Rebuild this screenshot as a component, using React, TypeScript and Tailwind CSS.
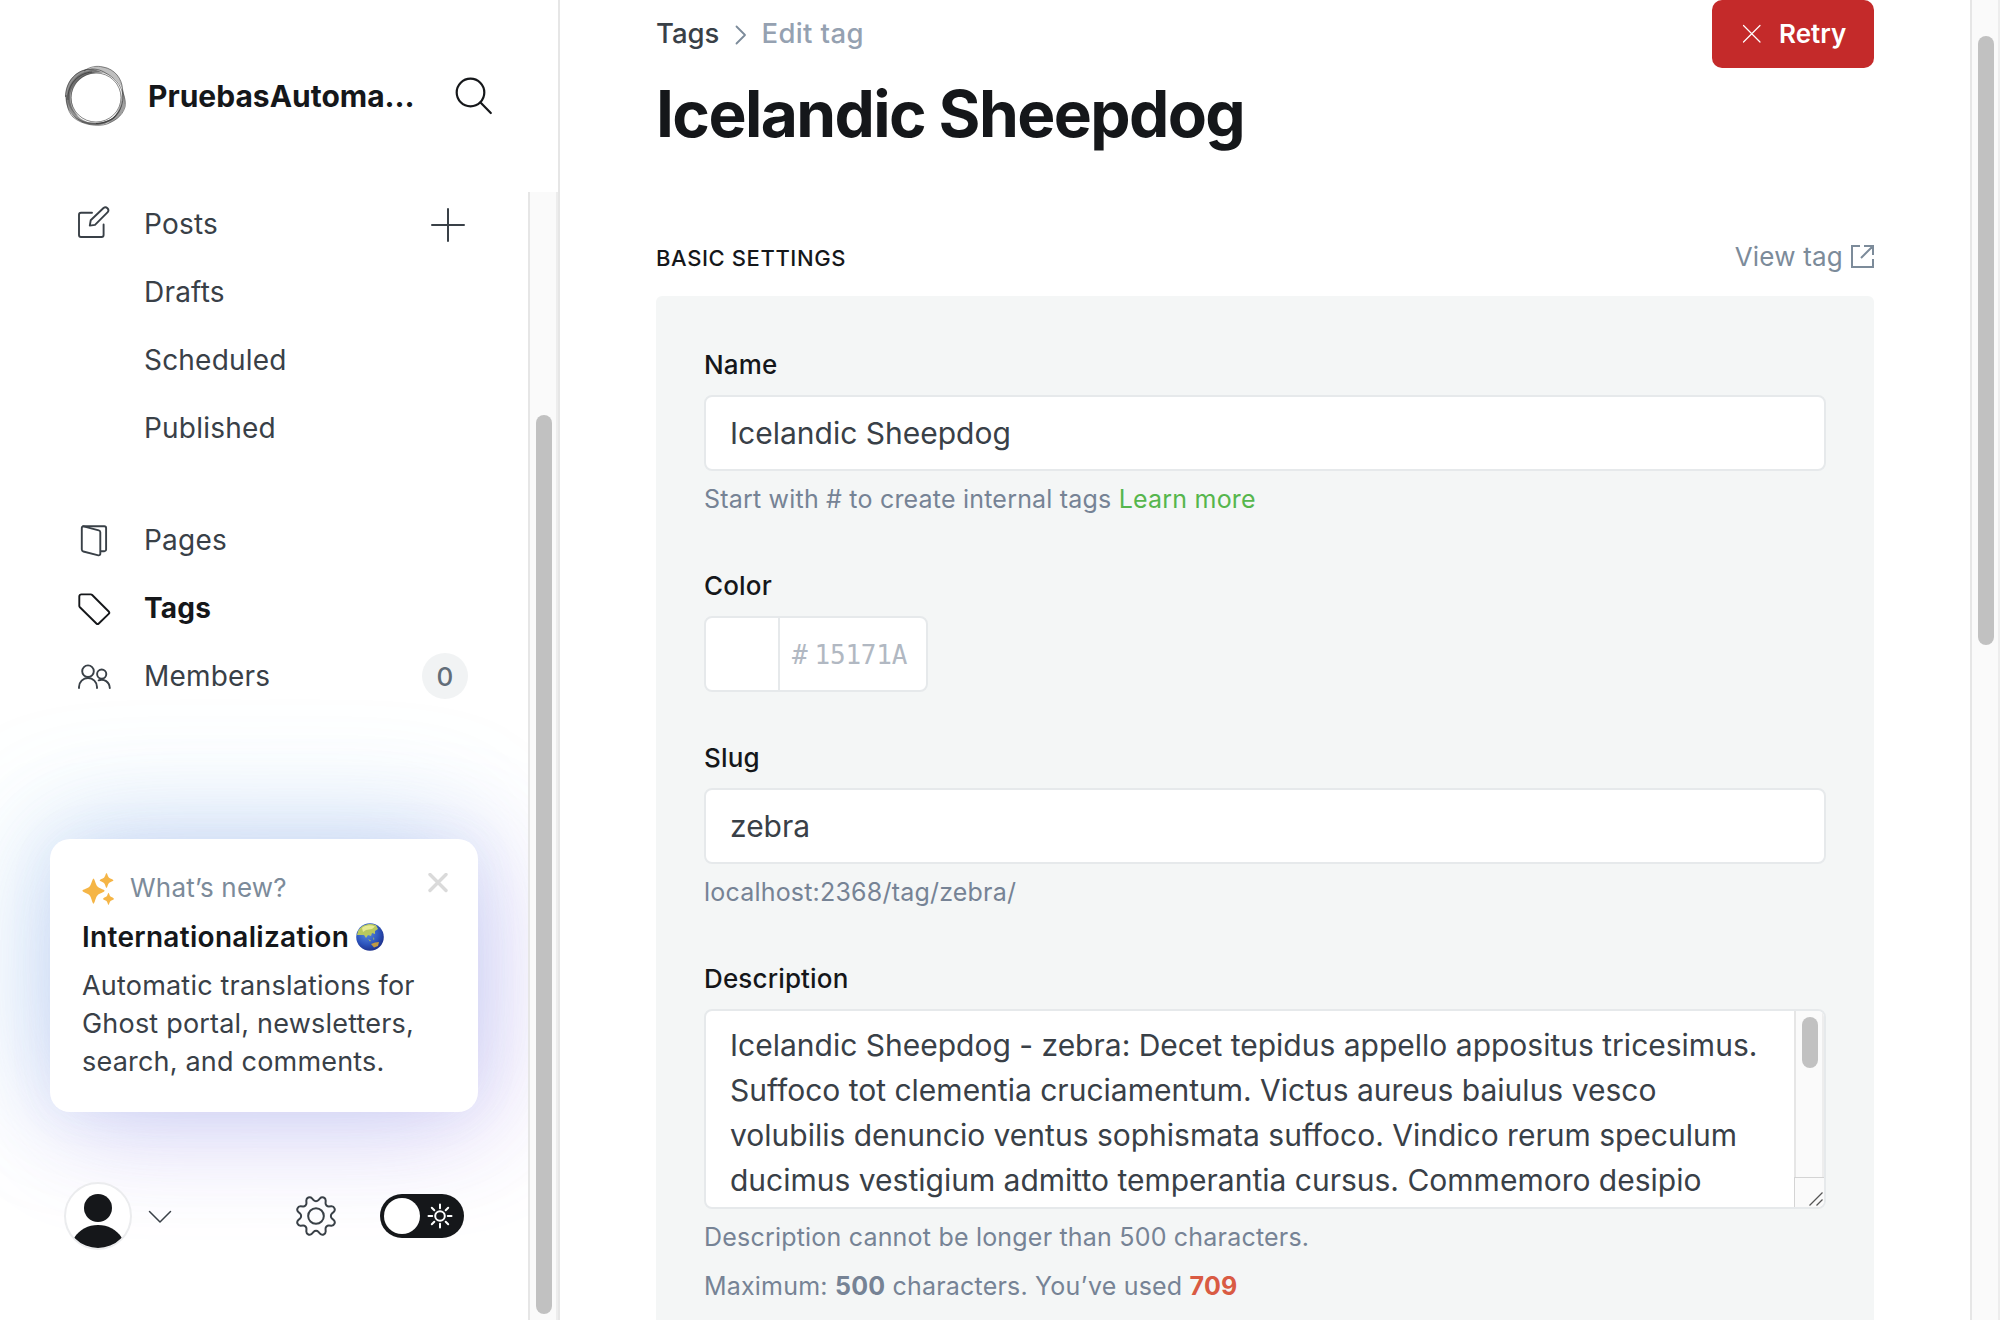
import React from "react";

const subItems = ["Drafts", "Scheduled", "Published"];

function Logo() {
  return (
    <svg width="64" height="64" viewBox="0 0 64 64" fill="none" className="shrink-0">
      <g fill="#2a2a2a" fillRule="evenodd">
        <path
          fillOpacity="0.5"
          d="M1.500 33C1.500 17 12 6 25 5C31 5 35 7 39 9C24 6 7 17 6 33C6 48 17 59 31.500 59C45 59 55 51 58 40C56 53 45 60.500 32 60.500C15 61 1.500 49 1.500 33Z"
        />
        <path
          fillOpacity="0.3"
          d="M24 6C29 3 33 1.500 39 3C51 5 58 15 58.500 25C54 15 44 8.500 34 8.500C30 8 27 7 24 6Z"
        />
        <path fillOpacity="0.45" d="M58.500 24C60 31 62 37 60.500 43C57.500 53 50 57 43 60C50 54 58 44 57.500 32Z" />
        <path fillOpacity="0.35" d="M3 31C5 18 13 9 25 7L34 9C19 9 8 20 7.500 34C7.500 42 11 48 15 53C6 47 3 39 3 31Z" />
        <path fillOpacity="0.5" d="M8 50C18 61 40 62 53 51C46 60 38 61 31 61C22 61 13 57 8 50Z" />
      </g>
      <g stroke="#222" strokeWidth="0.9" strokeOpacity="0.6">
        <path d="M20 7C26 2.500 33 1.500 39 3C51 5 58 15 58.500 25C59 31 62.500 36 61 43C58 53 50 57 43 60C34 63 18 61 9 53C2.500 46 3 38 2 31" />
        <path d="M1.500 33C1.500 17 13 5 28 5C36 5 40 8 45 11C53 16 59 24 59 34C58 49 47 59.500 32 59.500" />
        <ellipse cx="32" cy="33.500" rx="25" ry="24.500" />
        <path d="M4 36C3 20 15 9 28 8" />
      </g>
    </svg>
  );
}

function PostsIcon() {
  return (
    <svg width="36" height="36" viewBox="0 0 36 36" fill="none" stroke="#394047" strokeWidth="1.900" strokeLinecap="round" strokeLinejoin="round">
      <path d="M16 6.800H5a2 2 0 0 0-2 2v20.200a2 2 0 0 0 2 2h20.600a2 2 0 0 0 2-2V18.500" />
      <path d="M13.800 19.600l.9-5.300L27.500 2a3 3 0 0 1 4.200 4.200L19 18.900z" />
    </svg>
  );
}

function PagesIcon() {
  return (
    <svg width="36" height="36" viewBox="0 0 36 36" fill="none" stroke="#394047" strokeWidth="1.900" strokeLinecap="round" strokeLinejoin="round">
      <path d="M7 4.300h21.300a1.800 1.800 0 0 1 1.800 1.800v21.300a1.800 1.800 0 0 1-1.800 1.800h-3.500" />
      <path d="M7.600 4.400l15.200 4a2 2 0 0 1 1.500 1.900v21.600a1.500 1.500 0 0 1-1.900 1.400L7.300 29.500a2 2 0 0 1-1.500-1.900V5.900a1.500 1.500 0 0 1 1.800-1.500z" />
    </svg>
  );
}

function TagIcon() {
  return (
    <svg width="36" height="36" viewBox="0 0 36 36" fill="none" stroke="#15171a" strokeWidth="1.900" strokeLinecap="round" strokeLinejoin="round">
      <path d="M5.400 4.400h9.400a2 2 0 0 1 1.400.6l16.500 16.500a1.700 1.700 0 0 1 0 2.400l-9.900 9.600a1.700 1.700 0 0 1-2.400 0L3.900 17.300a2 2 0 0 1-.6-1.400V6.500a2.100 2.100 0 0 1 2.100-2.100z" />
    </svg>
  );
}

function MembersIcon() {
  return (
    <svg width="36" height="36" viewBox="0 0 36 36" fill="none" stroke="#394047" strokeWidth="1.900" strokeLinecap="round" strokeLinejoin="round">
      <circle cx="12" cy="13.200" r="5.800" />
      <path d="M3 30v-1a9 9 0 0 1 18 0v1" />
      <circle cx="25.700" cy="16.100" r="4.600" />
      <path d="M22.600 22.300c5.500-1.800 10.900 1.400 11.200 7.700" />
    </svg>
  );
}

function GearIcon() {
  return (
    <svg width="40" height="40" viewBox="0 0 24 24" fill="none" stroke="#394047" strokeWidth="1.200" strokeLinecap="round" strokeLinejoin="round">
      <path d="M10.546 2.438a1.957 1.957 0 0 0 2.908 0L14.400 1.400a1.959 1.959 0 0 1 3.410 1.413l-.071 1.400a1.958 1.958 0 0 0 2.051 2.054l1.400-.071a1.959 1.959 0 0 1 1.410 3.410l-1.042.94a1.960 1.960 0 0 0 0 2.909l1.042.94a1.959 1.959 0 0 1-1.413 3.410l-1.400-.071a1.958 1.958 0 0 0-2.056 2.056l.071 1.400A1.959 1.959 0 0 1 14.400 22.600l-.941-1.041a1.959 1.959 0 0 0-2.908 0L9.606 22.600A1.959 1.959 0 0 1 6.200 21.192l.072-1.400a1.958 1.958 0 0 0-2.056-2.056l-1.400.071A1.958 1.958 0 0 1 1.400 14.400l1.041-.94a1.960 1.960 0 0 0 0-2.909L1.400 9.606A1.958 1.958 0 0 1 2.809 6.200l1.400.071a1.958 1.958 0 0 0 2.058-2.060L6.200 2.810A1.959 1.959 0 0 1 9.606 1.400z" />
      <circle cx="12" cy="12" r="4.700" />
    </svg>
  );
}

function Sparkles() {
  return (
    <svg width="32" height="32" viewBox="0 0 32 32" fill="#f5b546" className="shrink-0">
      <path d="M11.500 5.500C13 6.500 13.500 11.800 15.800 13.800C17.800 15.700 22.500 16.500 22.600 17.800C22.500 19.200 17.800 20.200 15.800 22C13.500 24 13 30 11.500 30.700C10 30 9.500 24 7.300 22C5.200 20.200 .6 19.200 .4 17.800C.6 16.500 5.200 15.700 7.300 13.800C9.500 11.800 10 6.500 11.500 5.500Z" />
      <path d="M24.500 0C25.500 .6 25.700 3.600 27 4.700C28.300 5.800 31.400 6.200 31.500 7.300C31.400 8.400 28.300 8.900 27 10C25.700 11.200 25.500 14.500 24.500 15C23.500 14.500 23.300 11.200 22 10C20.700 8.900 17.700 8.400 17.600 7.300C17.700 6.200 20.700 5.800 22 4.700C23.300 3.600 23.500 .6 24.500 0Z" />
      <path d="M26.500 19.700C27.300 20.300 27.500 22.700 28.500 23.600C29.500 24.500 31.900 24.900 32 25.900C31.900 26.800 29.500 27.200 28.500 28.100C27.500 29 27.300 31.500 26.500 32C25.700 31.500 25.500 29 24.500 28.100C23.500 27.200 21.100 26.800 21 25.900C21.100 24.900 23.500 24.500 24.500 23.600C25.500 22.700 25.700 20.300 26.500 19.700Z" />
    </svg>
  );
}

function Globe() {
  return (
    <svg width="28" height="28" viewBox="0 0 28 28" className="ml-[7px] shrink-0">
      <defs>
        <radialGradient id="sea" cx="0.4" cy="0.35" r="0.7">
          <stop offset="0" stopColor="#5b8de0" />
          <stop offset="0.6" stopColor="#2d55bd" />
          <stop offset="1" stopColor="#1b2c86" />
        </radialGradient>
        <clipPath id="disc">
          <circle cx="14" cy="14" r="13.500" />
        </clipPath>
      </defs>
      <circle cx="14" cy="14" r="13.800" fill="url(#sea)" />
      <g clipPath="url(#disc)">
        <path fill="#b9c95f" d="M2 8C6 1 14 0 20 2L22 6L19 8L19 11L16 10L15 13L12 12L10 15L8 12L4 12L1 12Z" />
        <path fill="#e6ea93" d="M6 5C9 2 15 1.500 19 3.500L16 6L10 7L7 9Z" />
        <path fill="#c09a45" d="M15 21L19 19.500L23 19L22 23L18 24.500Z" />
        <path fill="#a6bd5a" d="M12 16L15 17.500L14 18.500ZM17 14L18.500 16L17.500 17Z" />
      </g>
    </svg>
  );
}

function NavRow({
  icon,
  label,
  active = false,
  children,
}: {
  icon?: React.ReactNode;
  label: string;
  active?: boolean;
  children?: React.ReactNode;
}) {
  return (
    <div className="flex h-[68px] items-center pr-[60px] pl-[76px]">
      <span className="w-[68px] shrink-0">{icon}</span>
      <span
        className={
          active
            ? "flex-1 text-[28px] font-bold tracking-[0.2px] text-[#15171a]"
            : "flex-1 text-[28px] tracking-[0.2px] text-[#394047]"
        }
      >
        {label}
      </span>
      {children}
    </div>
  );
}

function WhatsNew() {
  return (
    <div className="mx-[50px] mt-[129px] h-[273px] w-[428px] rounded-[20px] bg-white pt-[34px] pr-[29px] pl-8 shadow-[-14px_-14px_120px_rgba(90,205,230,0.26),14px_14px_110px_rgba(175,105,230,0.32),0_0_50px_rgba(110,130,220,0.06)]">
      <div className="flex h-8 items-start">
        <Sparkles />
        <span className="ml-4 flex-1 text-[26px] leading-[30px] tracking-[0.2px] text-[#7c8b9a]">What’s new?</span>
        <svg width="20" height="20" viewBox="0 0 20 20" stroke="#dadada" strokeWidth="3.400" strokeLinecap="round" className="mr-px">
          <path d="M2 1.500L18 17.500M18 1.500L2 17.500" />
        </svg>
      </div>
      <div className="mt-[13px] flex h-[38px] items-center">
        <span className="text-[28px] font-semibold tracking-[0.3px] text-[#15171a]">Internationalization</span>
        <Globe />
      </div>
      <p className="mt-[11px] text-[27px] leading-[38px] tracking-[0.2px] whitespace-nowrap text-[#394047]">
        Automatic translations for
        <br />
        Ghost portal, newsletters,
        <br />
        search, and comments.
      </p>
    </div>
  );
}

function SidebarFooter() {
  return (
    <div className="mt-[70px] flex h-[68px] items-center pl-16">
      <div className="size-[68px] overflow-hidden rounded-full border-2 border-[#ebecee] bg-white">
        <svg width="64" height="64" viewBox="0 0 64 64" fill="#15171a">
          <circle cx="32" cy="24" r="14" />
          <path d="M8 54C14 45 22 41 32 41C42 41 50 45 56 54C50 61 41 64.500 32 64.500C23 64.500 14 61 8 54Z" />
        </svg>
      </div>
      <svg width="24" height="14" viewBox="0 0 24 14" fill="none" stroke="#394047" strokeWidth="1.500" strokeLinecap="round" strokeLinejoin="round" className="mt-0.5 ml-4">
        <path d="M1.500 1.500L12 12L22.500 1.500" />
      </svg>
      <span className="ml-[124px]">
        <GearIcon />
      </span>
      <div className="ml-11 flex h-11 w-[84px] items-center rounded-full bg-[#15171a] pl-1">
        <span className="size-9 rounded-full bg-white" />
        <svg width="26" height="26" viewBox="-13 -13 26 26" fill="none" stroke="#fff" strokeWidth="2" strokeLinecap="round" className="ml-[7px]">
          <circle cx="0" cy="0" r="4.800" />
          <path d="M0-11.500V-7.800M0 11.500V7.800M-11.500 0H-7.800M11.500 0H7.800M-8.200-8.200L-5.700-5.700M8.200 8.200L5.700 5.700M-8.200 8.200L-5.700 5.700M8.200-8.200L5.700-5.700" />
        </svg>
      </div>
    </div>
  );
}

function Sidebar() {
  return (
    <aside className="flex w-[560px] shrink-0 flex-col border-r-2 border-[#e6e6e6] bg-white">
      <header className="flex h-48 items-center pl-16">
        <Logo />
        <span className="ml-5 w-[268px] text-[30px] font-bold whitespace-nowrap text-[#15171a]">PruebasAutoma…</span>
        <svg width="38" height="38" viewBox="0 0 38 38" fill="none" stroke="#15171a" strokeWidth="2.200" strokeLinecap="round" className="ml-[39px]">
          <circle cx="15.500" cy="15.500" r="13.800" />
          <path d="M25.500 25.500L35.800 36" />
        </svg>
      </header>
      <div className="flex min-h-0 flex-1">
        <div className="w-[528px] overflow-hidden">
          <nav className="-mt-0.5">
            <NavRow icon={<PostsIcon />} label="Posts">
              <svg width="34" height="34" viewBox="0 0 34 34" stroke="#394047" strokeWidth="2" strokeLinecap="round" className="mt-0.5 mr-[3px]">
                <path d="M17 1V33M1 17H33" />
              </svg>
            </NavRow>
            {subItems.map((item) => (
              <NavRow key={item} label={item} />
            ))}
            <div className="h-11" />
            <NavRow icon={<PagesIcon />} label="Pages" />
            <NavRow icon={<TagIcon />} label="Tags" active />
            <NavRow icon={<MembersIcon />} label="Members">
              <span className="flex size-[46px] items-center justify-center rounded-full bg-[#f1f3f4] text-[26px] font-medium text-[#626d79]">0</span>
            </NavRow>
          </nav>
          <WhatsNew />
          <SidebarFooter />
        </div>
        <div className="w-[30px] border-x-2 border-l-[#e6e6e6] border-r-[#ededed] bg-[#fafafa] pt-[223px] pl-1.5">
          <div className="h-[899px] w-4 rounded-full bg-[#c1c1c1]" />
        </div>
      </div>
    </aside>
  );
}

function Label({ children }: { children: React.ReactNode }) {
  return <label className="block h-[46px] text-[26px] leading-8 font-medium tracking-[0.15px] text-[#15171a]">{children}</label>;
}

function Help({ children }: { children: React.ReactNode }) {
  return <p className="mt-3 h-8 text-[25px] leading-8 tracking-[0.2px] whitespace-nowrap text-[#768395]">{children}</p>;
}

function TextField({ value }: { value: string }) {
  return (
    <div className="flex h-[76px] items-center rounded-lg border-2 border-[#e6e9eb] bg-white px-6 text-[30px] text-[#394047]">
      {value}
    </div>
  );
}

function DescriptionField() {
  return (
    <div className="flex h-[200px] overflow-hidden rounded-lg border-2 border-[#e6e9eb] bg-white">
      <p className="flex-1 overflow-hidden pt-3 pl-6 text-[30px] leading-[45px] whitespace-nowrap text-[#394047]">
        Icelandic Sheepdog - zebra: Decet tepidus appello appositus tricesimus.
        <br />
        Suffoco tot clementia cruciamentum. Victus aureus baiulus vesco
        <br />
        volubilis denuncio ventus sophismata suffoco. Vindico rerum speculum
        <br />
        ducimus vestigium admitto temperantia cursus. Commemoro desipio
      </p>
      <div className="flex w-[30px] flex-col">
        <div className="flex-1 border-x-2 border-l-[#e6e6e6] border-r-[#ededed] bg-[#fafafa] pt-1.5 pl-1.5">
          <div className="h-[51px] w-4 rounded-full bg-[#c1c1c1]" />
        </div>
        <div className="flex h-[30px] items-end justify-end border-t border-l border-[#d4d4d4] bg-[#fafafa]">
          <svg width="15" height="15" viewBox="0 0 15 15" stroke="#555" strokeWidth="1.300">
            <path d="M0.500 13.500L13.500 0.500M7.500 13.500L13.500 7.500" />
          </svg>
        </div>
      </div>
    </div>
  );
}

export default function App() {
  return (
    <div className="flex h-[1320px] w-[2000px] overflow-hidden bg-white font-['Inter',sans-serif]">
      <Sidebar />
      <main className="flex w-[1410px] shrink-0 flex-col px-24">
        <div className="flex h-[68px] w-[1218px] items-start justify-between">
          <div className="flex h-[68px] items-center text-[27.500px]">
            <span className="font-medium text-[#394047]">Tags</span>
            <svg width="12" height="20" viewBox="0 0 12 20" fill="none" stroke="#7c8b9a" strokeWidth="1.800" strokeLinecap="round" strokeLinejoin="round" className="mt-0.5 mr-3.5 ml-4">
              <path d="M1.500 1.500L10 10L1.500 18.500" />
            </svg>
            <span className="font-medium tracking-[0.4px] text-[#95a1b1]">Edit tag</span>
          </div>
          <button className="flex h-[68px] w-[162px] items-center rounded-[10px] bg-[#c42a2a] pb-px pl-[30px] text-[26px] font-semibold text-white">
            <svg width="20" height="20" viewBox="0 0 20 20" stroke="#fff" strokeWidth="1.200" strokeLinecap="round" className="mt-px">
              <path d="M1.500 1.500L18 18M18 1.500L1.500 18" />
            </svg>
            <span className="ml-[17px]">Retry</span>
          </button>
        </div>
        <h1 className="mt-2 h-[76px] text-[64px] leading-[76px] font-bold tracking-[-1.600px] text-[#15171a]">Icelandic Sheepdog</h1>
        <div className="mt-[84px] flex h-11 w-[1218px] items-center justify-between">
          <h2 className="text-[22px] font-medium tracking-[0.6px] text-[#15171a] uppercase">Basic settings</h2>
          <a className="mb-[3px] flex items-center text-[26px] tracking-[0.2px] text-[#7c8b9a]">
            View tag
            <svg width="23" height="23" viewBox="0 0 23 23" fill="none" stroke="#7c8b9a" strokeWidth="2" className="ml-2">
              <path d="M9 1H1V22H22V14M13 1H22V10M21.500 1.500L10 13" />
            </svg>
          </a>
        </div>
        <section className="mt-4 w-[1218px] flex-1 rounded-t-md bg-[#f4f6f6] px-12 pt-[53px]">
          <Label>Name</Label>
          <TextField value="Icelandic Sheepdog" />
          <Help>
            Start with # to create internal tags <a className="text-[#56b64d]">Learn more</a>
          </Help>
          <div className="h-[55px]" />
          <Label>Color</Label>
          <div className="flex h-[76px] w-56 rounded-lg border-2 border-[#e6e9eb] bg-white">
            <div className="w-[74px] border-r-2 border-[#e6e9eb]" />
            <div className="flex items-center pt-0.5 pl-3 font-['DejaVu_Sans_Mono',monospace] text-[26px] tracking-[-0.2px] text-[#b1b8c2]">
              #<span className="ml-[7px]">15171A</span>
            </div>
          </div>
          <div className="h-[50px]" />
          <Label>Slug</Label>
          <TextField value="zebra" />
          <Help>localhost:2368/tag/zebra/</Help>
          <div className="h-[55px]" />
          <Label>Description</Label>
          <DescriptionField />
          <Help>Description cannot be longer than 500 characters.</Help>
          <div className="h-[5px]" />
          <Help>
            Maximum: <b className="font-bold">500</b> characters. You’ve used <b className="font-bold text-[#d95b43]">709</b>
          </Help>
        </section>
      </main>
      <div className="w-[30px] shrink-0 border-x-2 border-l-[#e6e6e6] border-r-[#ededed] bg-[#fafafa] pt-9 pl-1.5">
        <div className="h-[609px] w-4 rounded-full bg-[#c1c1c1]" />
      </div>
    </div>
  );
}
